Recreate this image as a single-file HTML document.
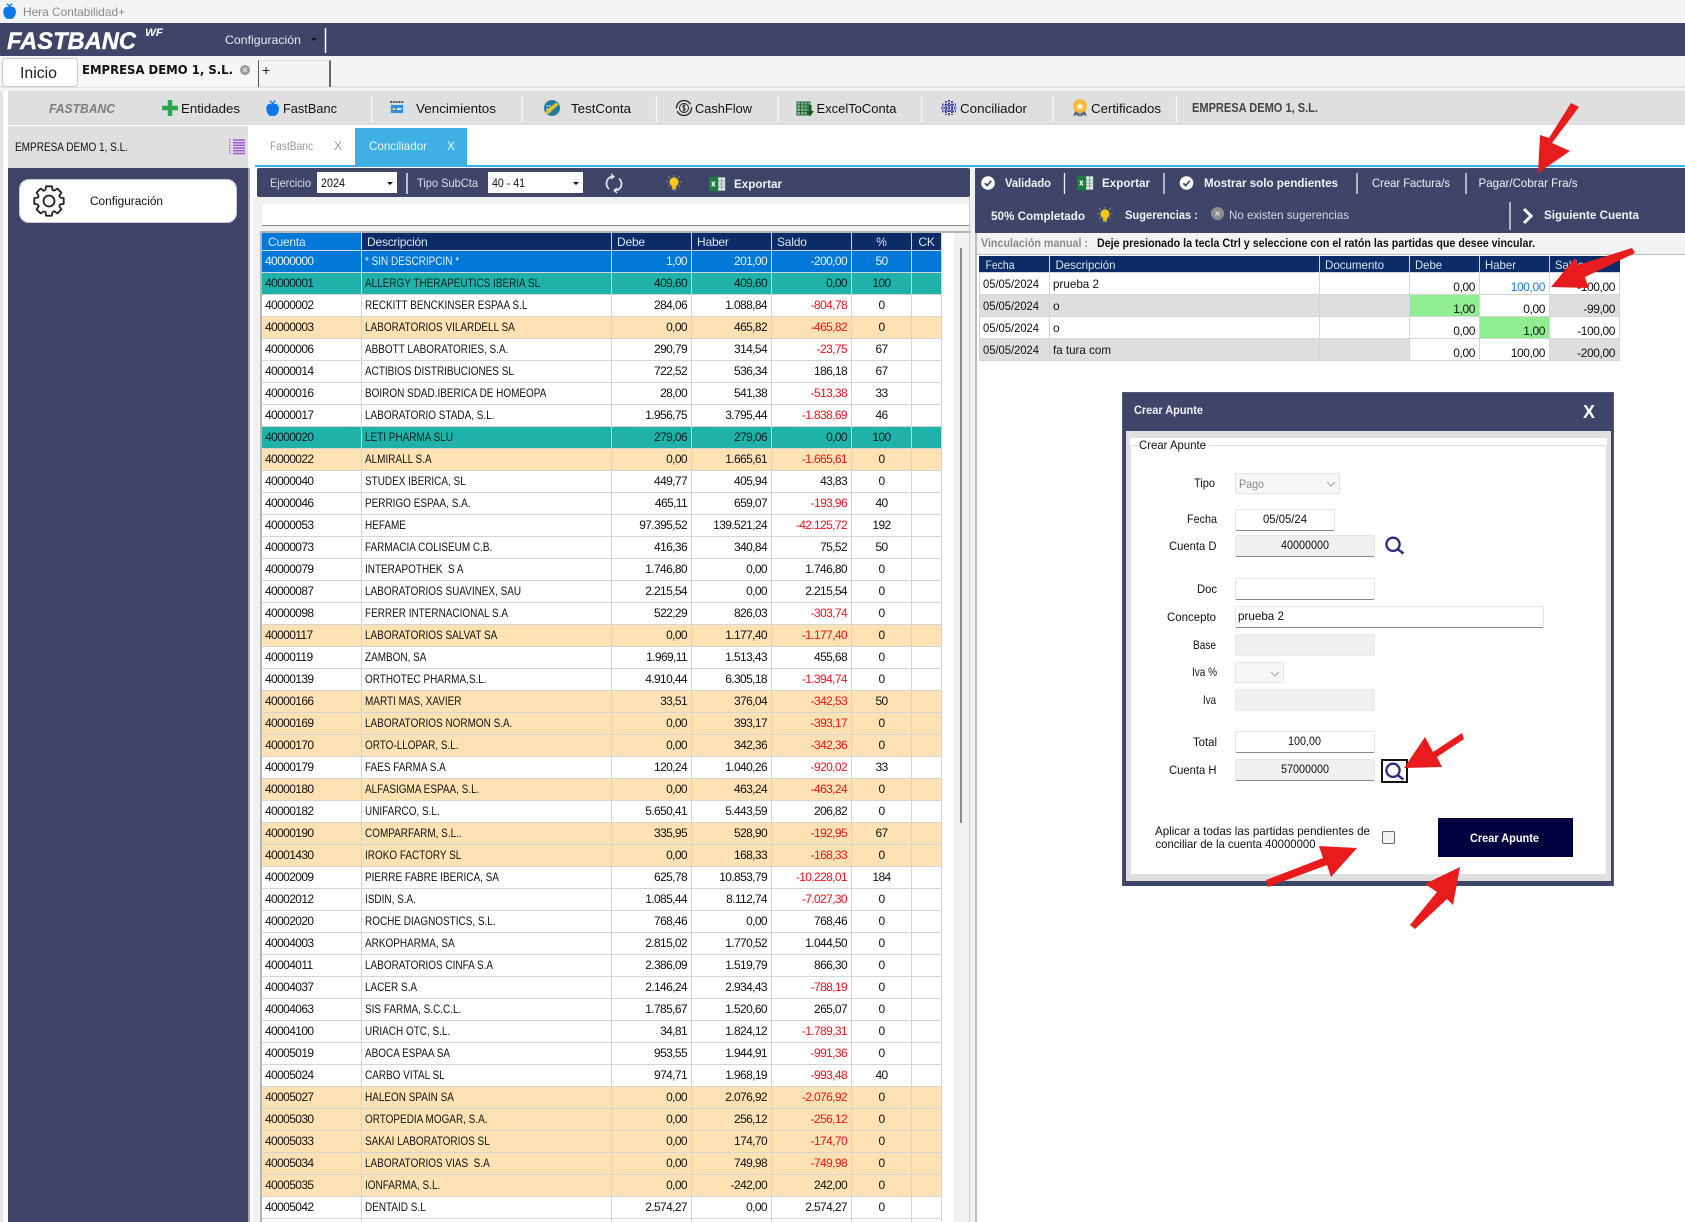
<!DOCTYPE html>
<html lang="es"><head><meta charset="utf-8"><title>Hera Contabilidad+</title>
<style>
html,body{margin:0;padding:0;background:#fff;width:1685px;height:1222px;overflow:hidden}
body{font-family:"Liberation Sans",sans-serif;font-size:12px;color:#111}
#w{position:relative;width:1685px;height:1222px;overflow:hidden}
.a{position:absolute;box-sizing:border-box}
.nv{background:#3f4569}
.in{position:absolute;box-sizing:border-box;background:#fff;border:1px solid #e4e4e4;border-bottom:1px solid #8a8a8a;border-radius:2px}
.dis{position:absolute;box-sizing:border-box;background:#f0f0f0;border:2px solid #ececec;border-radius:2px}
.sl{position:absolute;box-sizing:border-box;background:#f7f7f7;border:1px solid #e2e2e2;border-radius:2px}
table{position:absolute;border-collapse:separate;border-spacing:0;table-layout:fixed}
td,th{box-sizing:border-box;padding:0;overflow:hidden;white-space:pre;border-right:1px solid #d4d4d4;border-bottom:1px solid #d4d4d4;font-weight:normal}
#g{left:262px;top:233px;width:680px;background:#fff}
#g th{height:18px;line-height:15px;padding-top:2px;background:#0b2c66;color:#dfe4ee;text-align:left;padding-left:5px;border-color:#cfd6e4;font-size:12px;letter-spacing:-.2px}
#g th:first-child{background:#0078d7;padding-left:6px}
#g th:nth-child(6),#g th:nth-child(7){text-align:center;padding-left:0}
#g td{height:22px;line-height:21px;letter-spacing:-.62px}
#g td:nth-child(1){padding-left:3px}
#g td:nth-child(2){padding-left:3px}
#g td:nth-child(3),#g td:nth-child(4),#g td:nth-child(5){text-align:right;padding-right:4px}
#g td:nth-child(6){text-align:center}
#g b{display:inline-block;font-weight:normal;letter-spacing:0;transform:scaleX(.83);transform-origin:0 50%}
#g .r{color:#f4101c}
tr.s td{background:#0078d7;color:#e9f2ff}
tr.t td{background:#20b2aa;color:#06201e}
tr.o td{background:#fee2b3}
</style></head><body><div id="w">

<div class="a" style="left:0;top:0;width:1685px;height:23px;background:#f3f3f3"></div>
<div class="a nv" style="left:0;top:23px;width:1685px;height:33px"></div>
<div class="a" style="left:0;top:56px;width:1685px;height:35px;background:#f4f4f4"></div>
<div class="a" style="left:0;top:86px;width:1685px;height:2px;background:#e4e4e4"></div>
<div class="a" style="left:78px;top:59px;width:180px;height:28px;background:#f6f6f6"></div>
<div class="a" style="left:258px;top:60px;width:73px;height:27px;border:1px solid #dcdcdc;border-left:1px solid #555;border-right:2px solid #666;border-bottom:0"></div>
<div class="a" style="left:2px;top:58px;width:76px;height:29px;background:#fff;border:1px solid #ccc;border-radius:4px"></div>

<div class="a" style="left:8px;top:91px;width:1677px;height:34px;background:#dfdfdf"></div>
<div class="a" style="left:0;top:91px;width:3px;height:1131px;background:#e6e6e6"></div>
<div class="a" style="left:8px;top:126px;width:240px;height:42px;background:#dfdfdf"></div>
<div class="a nv" style="left:8px;top:168px;width:240px;height:1054px"></div>
<div class="a" style="left:248px;top:168px;width:2px;height:1054px;background:#a8a8a8"></div>
<div class="a" style="left:19px;top:179px;width:218px;height:44px;background:#fff;border:1px solid #c8cad6;border-radius:10px"></div>

<div class="a" style="left:355px;top:128px;width:112px;height:37px;background:#3fb0e3"></div>
<div class="a" style="left:255px;top:165px;width:1430px;height:2px;background:#3fb0e3"></div>
<div class="a nv" style="left:257px;top:168px;width:713px;height:29px;border-radius:2px"></div>
<div class="a" style="left:971px;top:168px;width:4px;height:1054px;background:#f1f1f1"></div>
<div class="a nv" style="left:975px;top:168px;width:710px;height:65px"></div>
<div class="a" style="left:975px;top:233px;width:710px;height:21px;background:#f3f3f3"></div>
<div class="a" style="left:975px;top:254px;width:710px;height:1px;background:#bdbdbd"></div>
<div class="a" style="left:975px;top:233px;width:2px;height:989px;background:#bdbdbd"></div>

<div class="a" style="left:253px;top:197px;width:718px;height:1025px;background:#f1f1f1"></div>
<div class="a" style="left:262px;top:204px;width:708px;height:22px;background:#fff;border-bottom:1px solid #8a8a8a"></div>
<div class="a" style="left:942px;top:233px;width:12px;height:989px;background:#fff"></div>
<div class="a" style="left:260px;top:231px;width:711px;height:2px;background:#b5b5b5"></div>
<div class="a" style="left:260px;top:231px;width:2px;height:991px;background:#b5b5b5"></div>
<div class="a" style="left:969px;top:197px;width:1px;height:1025px;background:#cfcfcf"></div>
<div class="a" style="left:960px;top:248px;width:2px;height:575px;background:#8c8c8c"></div>
<div class="a" style="left:317px;top:172px;width:80px;height:21px;background:#fff"></div>
<div class="a" style="left:488px;top:172px;width:95px;height:21px;background:#fff"></div>

<table id="g"><colgroup><col style="width:100px"><col style="width:250px"><col style="width:80px"><col style="width:80px"><col style="width:80px"><col style="width:60px"><col style="width:30px"></colgroup>
<tr><th>Cuenta<th>Descripción<th>Debe<th>Haber<th>Saldo<th>%<th>CK
<tr class=s><td>40000000<td><b>* SIN DESCRIPCIN *</b><td>1,00<td>201,00<td>-200,00<td>50<td>
<tr class=t><td>40000001<td><b>ALLERGY THERAPEUTICS IBERIA SL</b><td>409,60<td>409,60<td>0,00<td>100<td>
<tr><td>40000002<td><b>RECKITT BENCKINSER ESPAA S.L</b><td>284,06<td>1.088,84<td class=r>-804,78<td>0<td>
<tr class=o><td>40000003<td><b>LABORATORIOS VILARDELL SA</b><td>0,00<td>465,82<td class=r>-465,82<td>0<td>
<tr><td>40000006<td><b>ABBOTT LABORATORIES, S.A.</b><td>290,79<td>314,54<td class=r>-23,75<td>67<td>
<tr><td>40000014<td><b>ACTIBIOS DISTRIBUCIONES SL</b><td>722,52<td>536,34<td>186,18<td>67<td>
<tr><td>40000016<td><b>BOIRON SDAD.IBERICA DE HOMEOPA</b><td>28,00<td>541,38<td class=r>-513,38<td>33<td>
<tr><td>40000017<td><b>LABORATORIO STADA, S.L.</b><td>1.956,75<td>3.795,44<td class=r>-1.838,69<td>46<td>
<tr class=t><td>40000020<td><b>LETI PHARMA SLU</b><td>279,06<td>279,06<td>0,00<td>100<td>
<tr class=o><td>40000022<td><b>ALMIRALL S.A</b><td>0,00<td>1.665,61<td class=r>-1.665,61<td>0<td>
<tr><td>40000040<td><b>STUDEX IBERICA, SL</b><td>449,77<td>405,94<td>43,83<td>0<td>
<tr><td>40000046<td><b>PERRIGO ESPAA, S.A.</b><td>465,11<td>659,07<td class=r>-193,96<td>40<td>
<tr><td>40000053<td><b>HEFAME</b><td>97.395,52<td>139.521,24<td class=r>-42.125,72<td>192<td>
<tr><td>40000073<td><b>FARMACIA COLISEUM C.B.</b><td>416,36<td>340,84<td>75,52<td>50<td>
<tr><td>40000079<td><b>INTERAPOTHEK  S A</b><td>1.746,80<td>0,00<td>1.746,80<td>0<td>
<tr><td>40000087<td><b>LABORATORIOS SUAVINEX, SAU</b><td>2.215,54<td>0,00<td>2.215,54<td>0<td>
<tr><td>40000098<td><b>FERRER INTERNACIONAL S.A</b><td>522,29<td>826,03<td class=r>-303,74<td>0<td>
<tr class=o><td>40000117<td><b>LABORATORIOS SALVAT SA</b><td>0,00<td>1.177,40<td class=r>-1.177,40<td>0<td>
<tr><td>40000119<td><b>ZAMBON, SA</b><td>1.969,11<td>1.513,43<td>455,68<td>0<td>
<tr><td>40000139<td><b>ORTHOTEC PHARMA,S.L.</b><td>4.910,44<td>6.305,18<td class=r>-1.394,74<td>0<td>
<tr class=o><td>40000166<td><b>MARTI MAS, XAVIER</b><td>33,51<td>376,04<td class=r>-342,53<td>50<td>
<tr class=o><td>40000169<td><b>LABORATORIOS NORMON S.A.</b><td>0,00<td>393,17<td class=r>-393,17<td>0<td>
<tr class=o><td>40000170<td><b>ORTO-LLOPAR, S.L.</b><td>0,00<td>342,36<td class=r>-342,36<td>0<td>
<tr><td>40000179<td><b>FAES FARMA S.A</b><td>120,24<td>1.040,26<td class=r>-920,02<td>33<td>
<tr class=o><td>40000180<td><b>ALFASIGMA ESPAA, S.L.</b><td>0,00<td>463,24<td class=r>-463,24<td>0<td>
<tr><td>40000182<td><b>UNIFARCO, S.L.</b><td>5.650,41<td>5.443,59<td>206,82<td>0<td>
<tr class=o><td>40000190<td><b>COMPARFARM, S.L..</b><td>335,95<td>528,90<td class=r>-192,95<td>67<td>
<tr class=o><td>40001430<td><b>IROKO FACTORY SL</b><td>0,00<td>168,33<td class=r>-168,33<td>0<td>
<tr><td>40002009<td><b>PIERRE FABRE IBERICA, SA</b><td>625,78<td>10.853,79<td class=r>-10.228,01<td>184<td>
<tr><td>40002012<td><b>ISDIN, S.A.</b><td>1.085,44<td>8.112,74<td class=r>-7.027,30<td>0<td>
<tr><td>40002020<td><b>ROCHE DIAGNOSTICS, S.L.</b><td>768,46<td>0,00<td>768,46<td>0<td>
<tr><td>40004003<td><b>ARKOPHARMA, SA</b><td>2.815,02<td>1.770,52<td>1.044,50<td>0<td>
<tr><td>40004011<td><b>LABORATORIOS CINFA S.A</b><td>2.386,09<td>1.519,79<td>866,30<td>0<td>
<tr><td>40004037<td><b>LACER S.A</b><td>2.146,24<td>2.934,43<td class=r>-788,19<td>0<td>
<tr><td>40004063<td><b>SIS FARMA, S.C.C.L.</b><td>1.785,67<td>1.520,60<td>265,07<td>0<td>
<tr><td>40004100<td><b>URIACH OTC, S.L.</b><td>34,81<td>1.824,12<td class=r>-1.789,31<td>0<td>
<tr><td>40005019<td><b>ABOCA ESPAA SA</b><td>953,55<td>1.944,91<td class=r>-991,36<td>0<td>
<tr><td>40005024<td><b>CARBO VITAL SL</b><td>974,71<td>1.968,19<td class=r>-993,48<td>40<td>
<tr class=o><td>40005027<td><b>HALEON SPAIN SA</b><td>0,00<td>2.076,92<td class=r>-2.076,92<td>0<td>
<tr class=o><td>40005030<td><b>ORTOPEDIA MOGAR, S.A.</b><td>0,00<td>256,12<td class=r>-256,12<td>0<td>
<tr class=o><td>40005033<td><b>SAKAI LABORATORIOS SL</b><td>0,00<td>174,70<td class=r>-174,70<td>0<td>
<tr class=o><td>40005034<td><b>LABORATORIOS VIAS  S.A</b><td>0,00<td>749,98<td class=r>-749,98<td>0<td>
<tr class=o><td>40005035<td><b>IONFARMA, S.L.</b><td>0,00<td>-242,00<td>242,00<td>0<td>
<tr><td>40005042<td><b>DENTAID S.L</b><td>2.574,27<td>0,00<td>2.574,27<td>0<td>
<tr><td><td><td><td><td><td><td>
</table>

<!-- right grid cells -->
<div class="a" style="left:979px;top:256px;width:641px;height:16px;background:#0b2c66"></div>
<div class="a" style="left:979px;top:295px;width:430px;height:22px;background:#dedede"></div>
<div class="a" style="left:979px;top:339px;width:430px;height:22px;background:#dedede"></div>
<div class="a" style="left:1549px;top:295px;width:71px;height:22px;background:#dedede"></div>
<div class="a" style="left:1549px;top:339px;width:71px;height:22px;background:#dedede"></div>
<div class="a" style="left:1409px;top:295px;width:71px;height:22px;background:#90ee90"></div>
<div class="a" style="left:1479px;top:317px;width:71px;height:22px;background:#90ee90"></div>
<svg class="a" style="left:0;top:0" width="1685" height="1222">
<g stroke="#d6d6d6" stroke-width="1" shape-rendering="crispEdges">
<path d="M979 272.500H1620M979 294.500H1620M979 316.500H1620M979 338.500H1620M979 360.500H1620"/>
<path d="M979.500 272V361M1049.500 272V361M1319.500 272V361M1409.500 272V361M1479.500 272V361M1549.500 272V361M1619.500 272V361"/>
<path stroke="#cfd6e4" d="M1049.500 256V272M1319.500 256V272M1409.500 256V272M1479.500 256V272M1549.500 256V272"/>
</g>
</svg>

<!-- modal -->
<div class="a nv" style="left:1122px;top:392px;width:492px;height:494px;border:1px solid #55597a;border-bottom:0"></div>
<div class="a" style="left:1126px;top:431px;width:485px;height:450px;background:#dfdfdf"></div>
<div class="a" style="left:1130px;top:438px;width:477px;height:8px;background:#fff"></div>
<div class="a" style="left:1131px;top:446px;width:475px;height:428px;background:#fff"></div>
<div class="a" style="left:1131px;top:445px;width:475px;height:1px;background:#dedede"></div>
<div class="a" style="left:1137px;top:440px;width:72px;height:12px;background:#fff"></div>
<div class="sl" style="left:1235px;top:473px;width:105px;height:21px"></div>
<div class="in" style="left:1235px;top:509px;width:100px;height:22px"></div>
<div class="in" style="left:1235px;top:535px;width:140px;height:22px;background:#f0f0f0"></div>
<div class="in" style="left:1235px;top:578px;width:140px;height:22px"></div>
<div class="in" style="left:1235px;top:606px;width:309px;height:22px"></div>
<div class="dis" style="left:1235px;top:634px;width:140px;height:22px"></div>
<div class="sl" style="left:1235px;top:662px;width:49px;height:21px"></div>
<div class="dis" style="left:1235px;top:689px;width:140px;height:22px"></div>
<div class="in" style="left:1235px;top:731px;width:140px;height:22px"></div>
<div class="in" style="left:1235px;top:759px;width:140px;height:22px;background:#f0f0f0"></div>
<div class="a" style="left:1381px;top:759px;width:27px;height:24px;border:2px solid #111;background:#fff"></div>
<div class="a" style="left:1382px;top:831px;width:13px;height:13px;border:1px solid #666;border-radius:2px;background:#f4f4f4"></div>
<div class="a" style="left:1438px;top:818px;width:135px;height:39px;background:#00003f"></div>

<svg class="a" style="left:0;top:0" width="1685" height="1222" font-family="'Liberation Sans',sans-serif" font-size="12">
<defs>
<g id="apple"><path d="M6.500 4.500C4 2.800 .5 4 .3 8.500.2 12.800 3 16 5 16c.7 0 1-.4 1.500-.4S7.500 16 8.200 16c2 0 4.800-3.200 4.700-7.500C12.700 4 9 2.800 6.500 4.500Z" fill="#0a78e6"/><path d="M6.500 4.500C6.300 2.500 5 1.500 3.800 1M6.500 4.500C7 2.800 8 1.500 9.300 .6" stroke="#0a78e6" stroke-width="1.300" fill="none"/></g>
<g id="xl"><rect x="6" y="1.500" width="10" height="13" fill="#f2f2f2" stroke="#b5b5b5" stroke-width=".5"/><path d="M9 2V14M12.500 2V14M7 5H15.500M7 8H15.500M7 11H15.500" stroke="#7ba88e" stroke-width="1"/><path d="M0 1.500 9 0V16L0 14.500Z" fill="#1f7a40"/><path d="M2.700 5.500 6 10.500M6 5.500 2.700 10.500" stroke="#fff" stroke-width="1.200"/></g>
<g id="bulb"><circle cx="7" cy="7" r="4.600" fill="#f9c815"/><rect x="4.800" y="10.500" width="4.400" height="3.500" fill="#eeb70c"/><rect x="5.300" y="14" width="3.400" height="1.500" fill="#6f86a8"/><path d="M7 0V1.500M1.500 1.500 2.700 2.700M12.500 1.500 11.300 2.700M-.500 7H1M13 7H14.500M1.200 11.500 2.400 10.500M12.800 11.500 11.600 10.500" stroke="#9aa0b4" stroke-width="1"/></g>
<g id="chk"><circle cx="7" cy="7" r="6.800" fill="#fff"/><path d="M3.800 7.200 6.200 9.500 10.300 4.800" stroke="#3f4569" stroke-width="1.700" fill="none"/></g>
<g id="mag" fill="none" stroke="#2b2a80"><circle cx="8" cy="7.300" r="6.600" stroke-width="2.300"/><path d="M12.500 12 18.500 16.500" stroke-width="2.400"/></g>
<path id="gt" d="M10.900 -3.550 14.700 -2.900V2.900L10.900 3.550A11.500 11.500 0 0 1 10.250 5.220" fill="none" stroke="#222" stroke-width="1.800" stroke-linejoin="round"/>
</defs>

<!-- title/logo -->
<use href="#apple" x="3" y="3"/>
<text x="23" y="16" fill="#8c8c8c" textLength="102" lengthAdjust="spacingAndGlyphs">Hera Contabilidad+</text>
<text x="7" y="49" fill="#fff" stroke="#fff" stroke-width=".4" font-size="24" font-weight="bold" font-style="italic" textLength="129" lengthAdjust="spacingAndGlyphs">FASTBANC</text>
<text x="145" y="36" fill="#fff" font-size="11" font-weight="bold" font-style="italic" textLength="18" lengthAdjust="spacingAndGlyphs">WF</text>
<text x="225" y="44" fill="#e8e9ef" textLength="76" lengthAdjust="spacingAndGlyphs">Configuración</text>
<path d="M311 38h6l-3 3Z" fill="#111"/>
<path d="M325.500 28V53" stroke="#fff" stroke-width="1.500"/>

<!-- tabs -->
<text x="20" y="78" fill="#222" font-size="16" textLength="37" lengthAdjust="spacingAndGlyphs">Inicio</text>
<text x="82" y="74" fill="#111" font-size="12" font-weight="bold" font-family="'DejaVu Sans',sans-serif" textLength="151" lengthAdjust="spacingAndGlyphs">EMPRESA DEMO 1, S.L.</text>
<circle cx="245" cy="70" r="5" fill="#999"/><path d="M243 68l4 4M247 68l-4 4" stroke="#eee" stroke-width="1"/>
<text x="262" y="75" fill="#222" font-size="14">+</text>

<!-- main toolbar -->
<g font-size="13" fill="#111">
<text x="49" y="113" fill="#7d7d7d" font-weight="bold" font-style="italic" textLength="66" lengthAdjust="spacingAndGlyphs">FASTBANC</text>
<path d="M170 100V116M162 108H178" stroke="#2aa84f" stroke-width="4.500"/>
<text x="181" y="113" textLength="59" lengthAdjust="spacingAndGlyphs">Entidades</text>
<use href="#apple" x="266" y="100"/>
<text x="283" y="113" textLength="54" lengthAdjust="spacingAndGlyphs">FastBanc</text>
<text x="416" y="113" textLength="80" lengthAdjust="spacingAndGlyphs">Vencimientos</text>
<text x="571" y="113" textLength="60" lengthAdjust="spacingAndGlyphs">TestConta</text>
<text x="695" y="113" textLength="57" lengthAdjust="spacingAndGlyphs">CashFlow</text>
<text x="816.500" y="113" textLength="80" lengthAdjust="spacingAndGlyphs">ExcelToConta</text>
<text x="960" y="113" textLength="67" lengthAdjust="spacingAndGlyphs">Conciliador</text>
<text x="1091" y="113" textLength="70" lengthAdjust="spacingAndGlyphs">Certificados</text>
</g>
<text x="1192" y="112" fill="#444" font-size="12.500" font-weight="bold" textLength="126" lengthAdjust="spacingAndGlyphs">EMPRESA DEMO 1, S.L.</text>
<path d="M371.500 96V122M522 96V122M656.500 96V122M778 96V122M921.500 96V122M1053 96V122M1176.500 96V122" stroke="#f6f6f6" stroke-width="1.500"/>
<!-- calendar -->
<rect x="389" y="103.500" width="16" height="11" fill="#cfdce8"/><rect x="391" y="105" width="12" height="8" fill="#2f8fe0"/><path d="M390 102H404" stroke="#4e5a66" stroke-width="2" stroke-dasharray="2 .8"/><rect x="392.500" y="108" width="3" height="2" fill="#e8c860"/><rect x="397" y="108" width="4.500" height="2" fill="#cfe6fa"/>
<!-- testconta -->
<circle cx="552" cy="108" r="8" fill="#1d7f9c"/><path d="M546 111 556 102.500 558.500 104.500 549 113.500 546 114Z" fill="#f0c030"/><path d="M546 106 551 106M546 109H549" stroke="#cde" stroke-width="1"/>
<!-- cashflow -->
<g fill="none" stroke="#222"><circle cx="684" cy="108" r="7.500" stroke-width="1.300" stroke-dasharray="20 3"/><circle cx="684" cy="108" r="4.500" stroke-width="1"/><path d="M685.500 105.500C683 104.500 682 107 684 108S686 110.500 682.500 110M684 104V112" stroke-width=".8"/></g>
<!-- excel to conta -->
<g><rect x="797" y="102" width="13" height="13" fill="#8fbc9a" stroke="#1d6a33"/><path d="M797 105H810M800.500 102V115M804 102V115M807 102V115M797 108H810M797 111.500H810" stroke="#1d6a33" stroke-width="1.100"/><path d="M808.500 105V111H806L810 116.500 814 111H811.500V105Z" fill="#14562a"/></g>
<!-- conciliador -->
<g stroke="#1c1c94" fill="none"><path d="M949 100V116M946 101V115M952 101V115" stroke-width="1.700" stroke-dasharray="1.600 1"/><path d="M943 103V113M955 103V113" stroke-width="1" stroke="#5a5ad0" stroke-dasharray="1.500 1.200"/><path d="M941 108H957M942 105H956M942 111H956" stroke-width="1.200" stroke-dasharray="1.500 1.100"/></g>
<!-- certificado -->
<g><path d="M1075 111 1073 116 1077 115 1079 117 1081 112ZM1085 111 1087 116 1083 115 1081 117 1079 112Z" fill="#5a6f85"/><circle cx="1080" cy="106" r="7" fill="#f5b93a"/><path d="M1080 102.500 1081 105 1083.500 105.200 1081.500 107 1082.200 109.500 1080 108.200 1077.800 109.500 1078.500 107 1076.500 105.200 1079 105Z" fill="#fff"/></g>

<!-- left head -->
<text x="15" y="151" fill="#111" textLength="113" lengthAdjust="spacingAndGlyphs">EMPRESA DEMO 1, S.L.</text>
<path d="M233 140H245M233 142.700H245M233 145.400H245M233 148.100H245M233 150.800H245M233 153.500H245" stroke="#a055d4" stroke-width="1.500"/>
<path d="M229.700 139V155" stroke="#a055d4" stroke-width="1.300" stroke-dasharray="1.400 1.300"/>
<g transform="translate(49 201)">
<use href="#gt"/><use href="#gt" transform="rotate(45)"/><use href="#gt" transform="rotate(90)"/><use href="#gt" transform="rotate(135)"/><use href="#gt" transform="rotate(180)"/><use href="#gt" transform="rotate(225)"/><use href="#gt" transform="rotate(270)"/><use href="#gt" transform="rotate(315)"/>
<circle r="5.500" fill="none" stroke="#222" stroke-width="1.800"/></g>
<text x="90" y="205" fill="#111" font-size="11.500" textLength="73" lengthAdjust="spacingAndGlyphs">Configuración</text>

<!-- inner tabs -->
<text x="270" y="150" fill="#9a9a9a" textLength="43" lengthAdjust="spacingAndGlyphs">FastBanc</text>
<text x="334" y="150" fill="#9a9a9a">X</text>
<text x="369" y="150" fill="#eaf6fc" textLength="58" lengthAdjust="spacingAndGlyphs">Conciliador</text>
<text x="447" y="150" fill="#eaf6fc">X</text>

<!-- left toolbar -->
<g fill="#dcdfe9">
<text x="270" y="187" textLength="41" lengthAdjust="spacingAndGlyphs">Ejercicio</text>
<text x="417" y="187" textLength="61" lengthAdjust="spacingAndGlyphs">Tipo SubCta</text>
</g>
<path d="M407 173V194" stroke="#fff" stroke-width="1.300"/>
<text x="321" y="187" fill="#111" textLength="24" lengthAdjust="spacingAndGlyphs">2024</text>
<text x="492" y="187" fill="#111" textLength="33" lengthAdjust="spacingAndGlyphs">40 - 41</text>
<path d="M387 182h6l-3 3ZM573 182h6l-3 3Z" fill="#111"/>
<g fill="none" stroke="#e8e8ee" stroke-width="1.700"><path d="M609 189C604 184 607 177 613 176.500"/><path d="M619 178.500C624 183.500 621 190 615 190.500"/><path d="M611 174 614 176.500 611 179M617 188 614 190.500 617 193" stroke-width="1.300"/></g>
<use href="#bulb" x="667" y="175"/>
<use href="#xl" x="709" y="176"/>
<text x="734" y="188" fill="#f2f3f7" font-weight="bold" textLength="48" lengthAdjust="spacingAndGlyphs">Exportar</text>

<!-- right toolbar -->
<use href="#chk" x="981" y="176"/>
<g fill="#f2f3f7">
<text x="1005" y="187" font-weight="bold" textLength="46" lengthAdjust="spacingAndGlyphs">Validado</text>
<text x="1102" y="187" font-weight="bold" textLength="48" lengthAdjust="spacingAndGlyphs">Exportar</text>
<text x="1204" y="187" font-weight="bold" textLength="134" lengthAdjust="spacingAndGlyphs">Mostrar solo pendientes</text>
<text x="1372" y="187" textLength="78" lengthAdjust="spacingAndGlyphs">Crear Factura/s</text>
<text x="1478.500" y="187" textLength="99" lengthAdjust="spacingAndGlyphs">Pagar/Cobrar Fra/s</text>
<text x="991" y="220" font-weight="bold" textLength="94" lengthAdjust="spacingAndGlyphs">50% Completado</text>
<text x="1125" y="219" font-weight="bold" textLength="73" lengthAdjust="spacingAndGlyphs">Sugerencias :</text>
<text x="1229" y="219" fill="#d6d8e2" textLength="120" lengthAdjust="spacingAndGlyphs">No existen sugerencias</text>
<text x="1544" y="219" font-weight="bold" textLength="95" lengthAdjust="spacingAndGlyphs">Siguiente Cuenta</text>
</g>
<use href="#xl" x="1077" y="175"/>
<use href="#chk" x="1179.500" y="176"/>
<path d="M1064.500 173V194M1164 173V194M1357 173V194M1466 173V194M1510 202V230" stroke="#f0f0f0" stroke-width="1.300"/>
<use href="#bulb" x="1098" y="207"/>
<circle cx="1217.500" cy="213.500" r="6.500" fill="#8d8d8d"/><path d="M1215.500 211.500l4 4M1219.500 211.500l-4 4" stroke="#e5e5e5" stroke-width="1"/>
<path d="M1524 209 1531 216 1524 223" fill="none" stroke="#fff" stroke-width="3"/>

<text x="981" y="247" fill="#8a8a8a" font-weight="bold" textLength="107" lengthAdjust="spacingAndGlyphs">Vinculación manual :</text>
<text x="1097" y="247" fill="#111" font-weight="bold" textLength="438" lengthAdjust="spacingAndGlyphs">Deje presionado la tecla Ctrl y seleccione con el ratón las partidas que desee vincular.</text>

<!-- right grid text -->
<g fill="#dfe4ee">
<text x="985.500" y="269" textLength="29" lengthAdjust="spacingAndGlyphs">Fecha</text>
<text x="1055.500" y="269" textLength="60" lengthAdjust="spacingAndGlyphs">Descripción</text>
<text x="1325" y="269" textLength="59" lengthAdjust="spacingAndGlyphs">Documento</text>
<text x="1415" y="269" textLength="27" lengthAdjust="spacingAndGlyphs">Debe</text>
<text x="1485" y="269" textLength="31" lengthAdjust="spacingAndGlyphs">Haber</text>
<text x="1555" y="269" textLength="29" lengthAdjust="spacingAndGlyphs">Saldo</text>
</g>
<g fill="#111">
<text x="983" y="288" textLength="56" lengthAdjust="spacingAndGlyphs">05/05/2024</text>
<text x="983" y="310" textLength="56" lengthAdjust="spacingAndGlyphs">05/05/2024</text>
<text x="983" y="332" textLength="56" lengthAdjust="spacingAndGlyphs">05/05/2024</text>
<text x="983" y="354" textLength="56" lengthAdjust="spacingAndGlyphs">05/05/2024</text>
<text x="1053" y="288" textLength="46" lengthAdjust="spacingAndGlyphs">prueba 2</text>
<text x="1053" y="310">o</text>
<text x="1053" y="332">o</text>
<text x="1053" y="354" textLength="58" lengthAdjust="spacingAndGlyphs">fa tura com</text>
<g text-anchor="end" letter-spacing="-.4">
<text x="1475" y="291">0,00</text><text x="1545" y="291" fill="#1d7be0">100,00</text><text x="1615" y="291">-100,00</text>
<text x="1475" y="313">1,00</text><text x="1545" y="313">0,00</text><text x="1615" y="313">-99,00</text>
<text x="1475" y="335">0,00</text><text x="1545" y="335">1,00</text><text x="1615" y="335">-100,00</text>
<text x="1475" y="357">0,00</text><text x="1545" y="357">100,00</text><text x="1615" y="357">-200,00</text>
</g></g>

<!-- modal text -->
<text x="1134" y="414" fill="#f0f1f6" font-weight="bold" textLength="69" lengthAdjust="spacingAndGlyphs">Crear Apunte</text>
<text x="1583" y="418" fill="#fff" font-size="18" font-weight="bold" textLength="12" lengthAdjust="spacingAndGlyphs">X</text>
<g fill="#111">
<text x="1139" y="449" textLength="67" lengthAdjust="spacingAndGlyphs">Crear Apunte</text>
<text x="1194" y="487" textLength="21" lengthAdjust="spacingAndGlyphs">Tipo</text>
<text x="1187" y="523" textLength="30" lengthAdjust="spacingAndGlyphs">Fecha</text>
<text x="1169" y="550" textLength="47.500" lengthAdjust="spacingAndGlyphs">Cuenta D</text>
<text x="1197" y="593" textLength="20" lengthAdjust="spacingAndGlyphs">Doc</text>
<text x="1167" y="621" textLength="49" lengthAdjust="spacingAndGlyphs">Concepto</text>
<text x="1193" y="649" textLength="23" lengthAdjust="spacingAndGlyphs">Base</text>
<text x="1192" y="676" textLength="25" lengthAdjust="spacingAndGlyphs">Iva %</text>
<text x="1203" y="704" textLength="13" lengthAdjust="spacingAndGlyphs">Iva</text>
<text x="1193" y="746" textLength="24" lengthAdjust="spacingAndGlyphs">Total</text>
<text x="1169" y="774" textLength="47.500" lengthAdjust="spacingAndGlyphs">Cuenta H</text>
<text x="1263" y="523" textLength="44" lengthAdjust="spacingAndGlyphs">05/05/24</text>
<text x="1281" y="549" textLength="48" lengthAdjust="spacingAndGlyphs">40000000</text>
<text x="1238" y="620" textLength="46" lengthAdjust="spacingAndGlyphs">prueba 2</text>
<text x="1288" y="745" textLength="33" lengthAdjust="spacingAndGlyphs">100,00</text>
<text x="1281" y="773" textLength="48" lengthAdjust="spacingAndGlyphs">57000000</text>
<text x="1155" y="835" textLength="215" lengthAdjust="spacingAndGlyphs">Aplicar a todas las partidas pendientes de</text>
<text x="1155.500" y="848" textLength="160" lengthAdjust="spacingAndGlyphs">conciliar de la cuenta 40000000</text>
</g>
<text x="1239" y="488" fill="#8a8a8a" textLength="25" lengthAdjust="spacingAndGlyphs">Pago</text>
<path d="M1327 482 1331 486 1335 482M1271 672 1275 676 1279 672" fill="none" stroke="#aaa" stroke-width="1"/>
<use href="#mag" x="1385" y="537"/>
<use href="#mag" x="1385" y="763"/>
<text x="1470" y="842" fill="#fff" font-weight="bold" textLength="69" lengthAdjust="spacingAndGlyphs">Crear Apunte</text>

<!-- red arrows -->
<g fill="#e81c1c">
<polygon points="1571,103 1579,107 1552,143 1570,151 1538,173 1540,135 1549,138"/>
<polygon points="1632,248 1635,253 1585,277 1588.500,288 1551,287 1575,258 1578,265"/>
<polygon points="1462,733 1464,739 1437,757 1442,767 1404,768 1425,737 1433,752"/>
<polygon points="1266,880 1268,887 1327,865 1331,877 1357,848 1319,846 1323,858"/>
<polygon points="1410,925 1415,929 1447,899 1453,905 1460,867 1425,884 1437,892"/>
</g>
</svg>
</div></body></html>
